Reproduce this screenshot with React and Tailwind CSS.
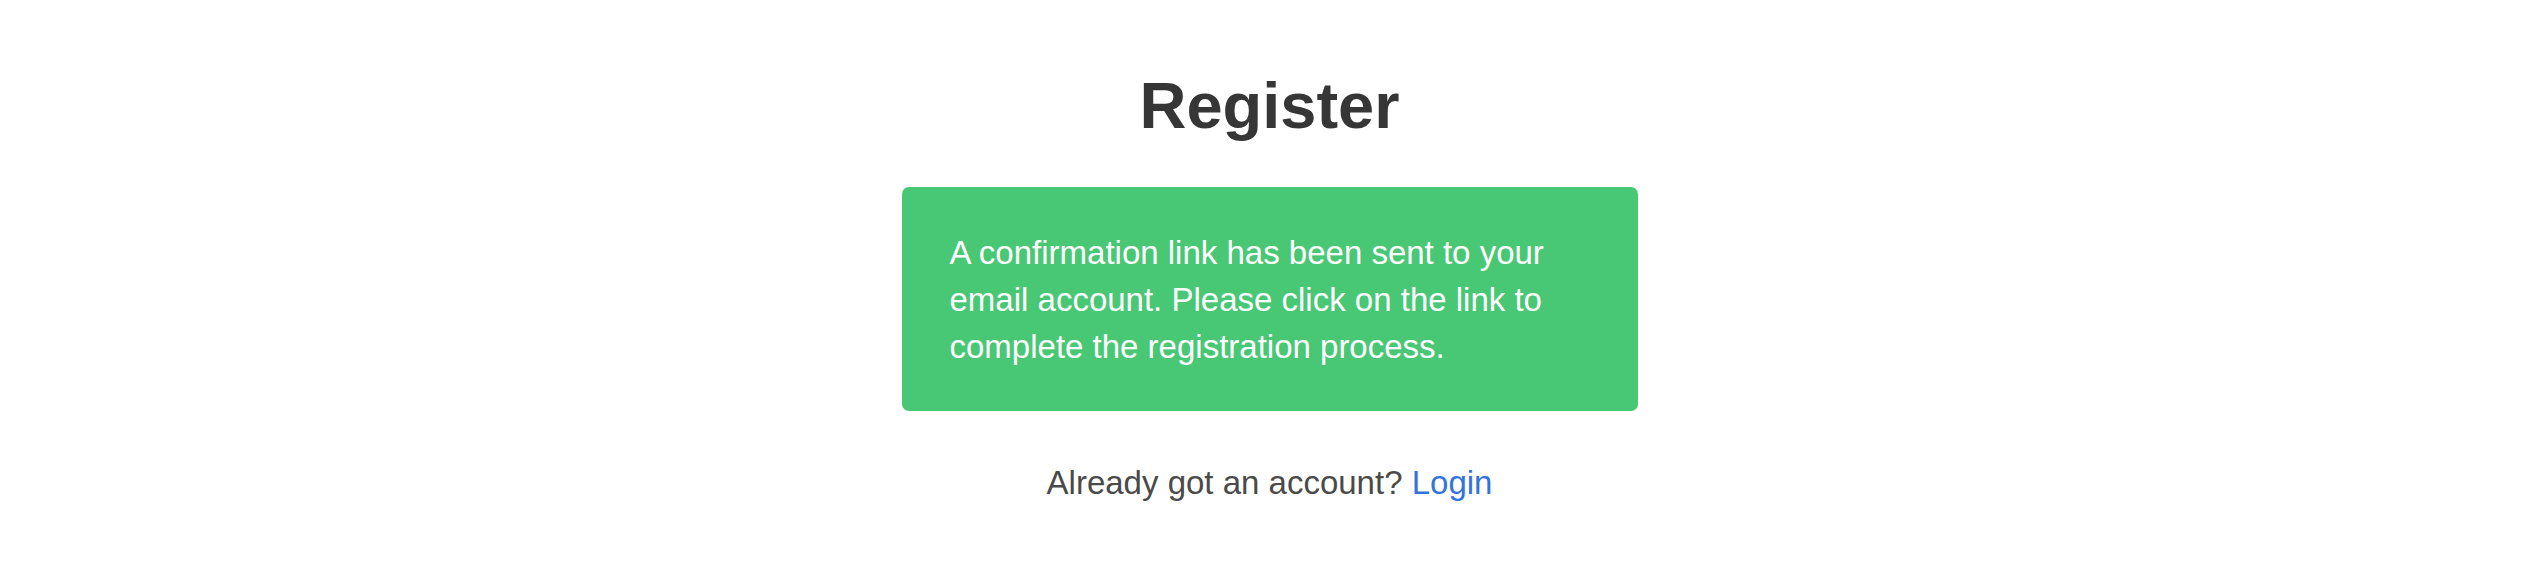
import React from "react";

const App = () => {
    return (
        <div
            className="min-h-[581px] w-full bg-white flex flex-col items-center pt-[70px]"
            style={{ fontFamily: '"Liberation Sans", Arial, Helvetica, sans-serif' }}
        >
            {/* page title */}
            <h1 className="text-[65px] leading-[72px] font-bold text-[#363636] text-center">
                Register
            </h1>

            {/* success notification */}
            <div className="mt-[45px] w-[736px] rounded-[7px] bg-[#48c774] text-white pt-[42px] pb-[41px] pl-[48px] pr-[76px]">
                <p className="text-[33px] leading-[47px]">
                    A confirmation link has been sent to your email account. Please
                    click on the link to complete the registration process.
                </p>
            </div>

            <p className="mt-[48px] text-[33px] leading-[48px] text-[#4a4a4a] text-center">
                Already got an account?{" "}
                <a href="#" className="text-[#3273dc]">
                    Login
                </a>
            </p>
        </div>
    );
};

export default App;
